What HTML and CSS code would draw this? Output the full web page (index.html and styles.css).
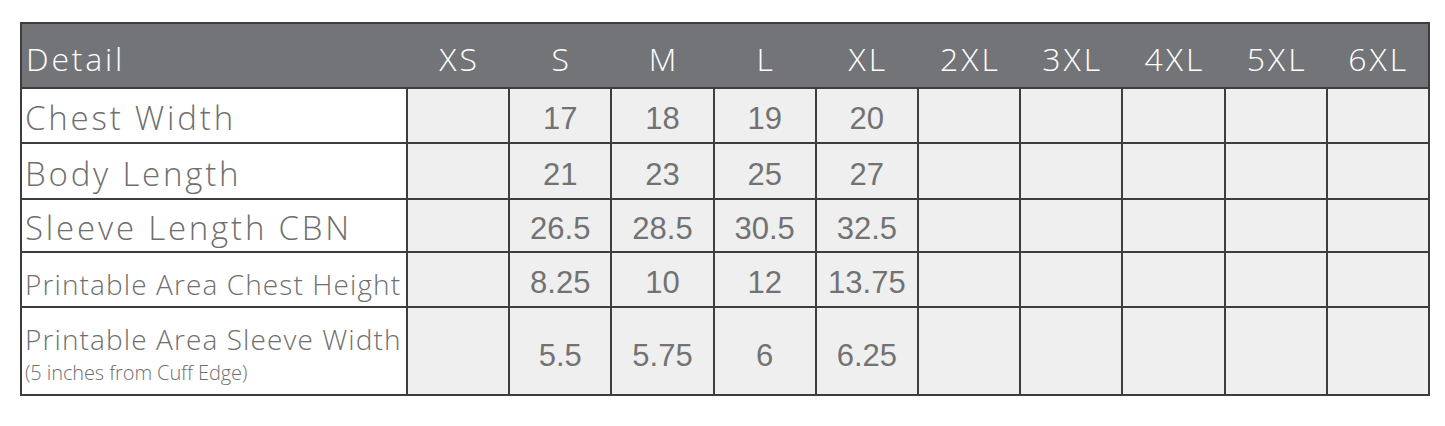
FILE: index.html
```html
<!DOCTYPE html>
<html>
<head>
<meta charset="utf-8">
<link rel="stylesheet" href="styles.css">
</head>
<body>
<div class="wrap">
<table class="chart">
  <colgroup>
    <col class="c-detail">
    <col class="c-size"><col class="c-size"><col class="c-size"><col class="c-size"><col class="c-size">
    <col class="c-size"><col class="c-size"><col class="c-size"><col class="c-size"><col class="c-size">
  </colgroup>
  <thead>
    <tr class="head">
      <th class="label">Detail</th>
      <th>XS</th><th>S</th><th>M</th><th>L</th><th>XL</th>
      <th>2XL</th><th>3XL</th><th>4XL</th><th>5XL</th><th>6XL</th>
    </tr>
  </thead>
  <tbody>
    <tr class="r1">
      <td class="label big">Chest Width</td>
      <td></td><td>17</td><td>18</td><td>19</td><td>20</td>
      <td></td><td></td><td></td><td></td><td></td>
    </tr>
    <tr class="r2">
      <td class="label big">Body Length</td>
      <td></td><td>21</td><td>23</td><td>25</td><td>27</td>
      <td></td><td></td><td></td><td></td><td></td>
    </tr>
    <tr class="r3">
      <td class="label big">Sleeve Length CBN</td>
      <td></td><td>26.5</td><td>28.5</td><td>30.5</td><td>32.5</td>
      <td></td><td></td><td></td><td></td><td></td>
    </tr>
    <tr class="r4">
      <td class="label mid">Printable Area Chest Height</td>
      <td></td><td>8.25</td><td>10</td><td>12</td><td>13.75</td>
      <td></td><td></td><td></td><td></td><td></td>
    </tr>
    <tr class="r5">
      <td class="label mid two"><span class="main">Printable Area Sleeve Width</span><span class="note">(5 inches from Cuff Edge)</span></td>
      <td></td><td>5.5</td><td>5.75</td><td>6</td><td>6.25</td>
      <td></td><td></td><td></td><td></td><td></td>
    </tr>
  </tbody>
</table>
</div>
</body>
</html>
```
FILE: styles.css
```css
html, body {
  margin: 0;
  padding: 0;
  background: #ffffff;
}

.wrap {
  padding: 22px 0 0 20px;
}

.chart {
  border-collapse: collapse;
  table-layout: fixed;
  width: 1408px;
  border: 2px solid #3d3d3d;
}

.c-detail { width: 386px; }
.c-size { width: 102.2px; }

.chart th,
.chart td {
  padding: 0;
  text-align: center;
  vertical-align: middle;
}

.head th {
  background: #737478;
  color: #ffffff;
  font-family: "Open Sans", sans-serif;
  font-weight: 300;
  font-size: 32px;
  letter-spacing: 3px;
  line-height: 1;
  height: 56px;
  padding-top: 7px;
  padding-left: 3px;
  border-bottom: 2px solid #3d3d3d;
}

.head th.label {
  text-align: left;
  padding-left: 4px;
  letter-spacing: 2.8px;
}

.chart td {
  background: #efefef;
  border: 2px solid #3d3d3d;
  font-family: "Liberation Sans", Arial, sans-serif;
  font-size: 31px;
  color: #727272;
  line-height: 1;
  padding-top: 6px;
}

.chart td.label {
  background: #ffffff;
  text-align: left;
  padding-left: 3px;
  font-family: "Open Sans", sans-serif;
  font-weight: 300;
  color: #6f6f6f;
  line-height: 1.1;
}

.label.big {
  font-size: 33px;
  letter-spacing: 2.8px;
}

.label.mid {
  font-size: 28px;
  letter-spacing: 1.1px;
}

.r1 td { height: 47px; }
.r2 td { height: 48px; }
.r3 td { height: 45px; }
.r4 td { height: 47px; }
.r4 td.label { height: 44px; padding-top: 9px; }
.r5 td { height: 78px; padding-top: 8px; }

.r5 .two {
  height: auto;
  vertical-align: top;
  padding-top: 16px;
  line-height: normal;
}

.main,
.note {
  display: block;
}

.note {
  font-size: 20px;
  letter-spacing: -0.1px;
  line-height: normal;
  margin-top: 4px;
}
```
